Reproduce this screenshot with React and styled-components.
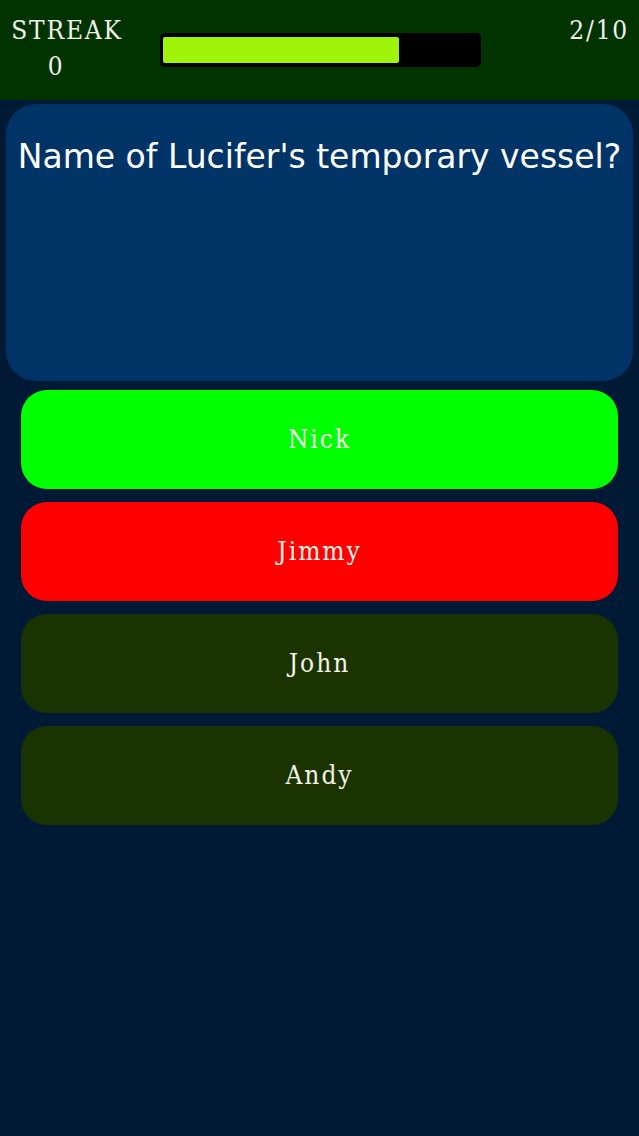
import styled, { createGlobalStyle } from "styled-components";

const GlobalStyle = createGlobalStyle`
  html, body {
    margin: 0;
    padding: 0;
    background: #001a36;
  }
`;

const answers = [
  { label: "Nick", state: "correct" },
  { label: "Jimmy", state: "wrong" },
  { label: "John", state: "idle" },
  { label: "Andy", state: "idle" },
];

const App = () => {
  const progress = 75;
  return (
    <>
      <GlobalStyle />
      <Screen>
        <Header>
          <Streak>
            <span>STREAK</span>
            <StreakValue>0</StreakValue>
          </Streak>
          <ProgressTrack>
            <ProgressFill style={{ width: `${progress}%` }} />
          </ProgressTrack>
          <Counter>2/10</Counter>
        </Header>
        <QuestionCard>
          <h2>Name of Lucifer's temporary vessel?</h2>
        </QuestionCard>
        <Answers>
          {answers.map((a) => (
            <AnswerButton key={a.label} $state={a.state}>
              {a.label}
            </AnswerButton>
          ))}
        </Answers>
      </Screen>
    </>
  );
};

export default App;

/* ---------------------------- STYLED COMPONENTS --------------------------- */

const Screen = styled.div`
  width: 639px;
  min-height: 1136px;
  background: #001a36;
  display: flex;
  flex-direction: column;
`;

const Header = styled.header`
  height: 100px;
  background: #003300;
  display: flex;
  align-items: flex-start;
  padding: 0 10px 0 10px;
  box-sizing: border-box;
  font-family: "DejaVu Serif Condensed", "DejaVu Serif", serif;
  color: #f2f2e8;
  font-size: 26px;
  letter-spacing: 1.8px;
`;

const Streak = styled.div`
  display: flex;
  flex-direction: column;
  align-items: center;
  padding-top: 12px;
  line-height: 36px;
  width: 114px;
`;

const StreakValue = styled.span`
  margin-right: 22px;
`;

const ProgressTrack = styled.div`
  margin: 33px 0 0 36px;
  width: 321px;
  height: 34px;
  background: #000;
  border-radius: 5px;
  padding: 4px 3px;
  box-sizing: border-box;
`;

const ProgressFill = styled.div`
  height: 100%;
  background: #9ef50a;
  border-radius: 2px;
`;

const Counter = styled.div`
  margin-left: auto;
  padding-top: 12px;
  line-height: 36px;
`;

const QuestionCard = styled.section`
  margin: 4px 6px 0;
  height: 277px;
  background: #003366;
  border-radius: 30px;
  display: flex;
  justify-content: center;

  h2 {
    margin: 0;
    padding-top: 33px;
    font-family: "DejaVu Sans", sans-serif;
    font-weight: normal;
    font-size: 33px;
    color: #fff;
    white-space: nowrap;
    line-height: 40px;
  }
`;

const Answers = styled.div`
  display: flex;
  flex-direction: column;
  gap: 13px;
  padding: 9px 21px 0;
`;

const colors = {
  correct: "#00ff00",
  wrong: "#ff0000",
  idle: "#1a3300",
};

const AnswerButton = styled.button`
  height: 99px;
  border: none;
  border-radius: 26px;
  background: ${(p) => colors[p.$state]};
  color: #f4f4ea;
  font-family: "DejaVu Serif Condensed", "DejaVu Serif", serif;
  font-size: 26px;
  letter-spacing: 2px;
  padding: 0 0 2px;
  cursor: pointer;
`;
